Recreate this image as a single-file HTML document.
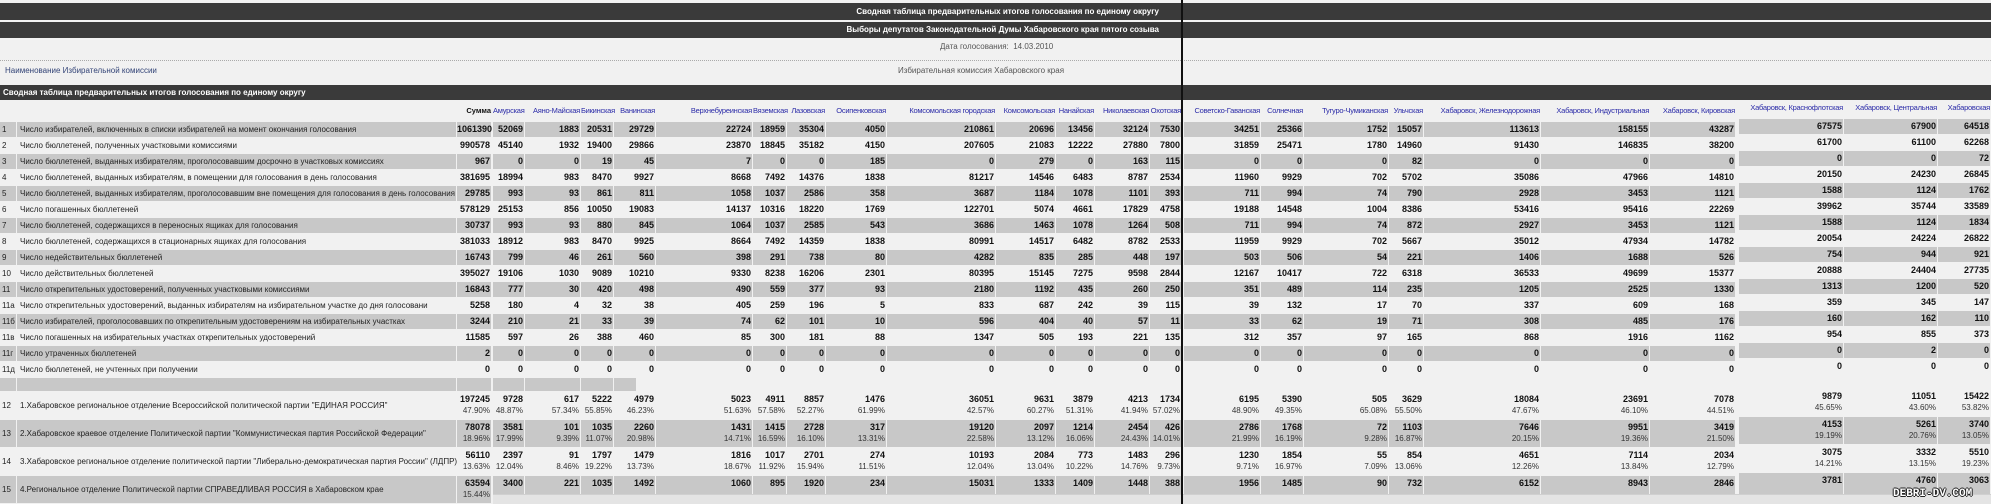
<!DOCTYPE html>
<html><head><meta charset="utf-8">
<style>
*{margin:0;padding:0;box-sizing:border-box}
body{width:1991px;height:504px;overflow:hidden;background:#f1f1f1;position:relative;font-family:"Liberation Sans","DejaVu Sans",sans-serif;color:#111}
.bar{position:absolute;left:0;width:1991px;background:#3a3a3a;color:#fff;font-weight:bold;font-size:8px;line-height:15px}
.bar span{position:absolute;right:832px;top:0}
.vl{position:absolute;left:1181px;top:0;width:2px;height:504px;background:#111;z-index:5}
.t{position:absolute;font-size:8px;color:#555;white-space:nowrap}
.r{position:absolute;left:0;width:1991px;height:16px;font-size:9px}
.r b,.r i,.r u{position:absolute;top:0;height:15px;line-height:15px;white-space:nowrap;text-decoration:none;font-style:normal}
.r b{text-align:right;padding-right:1px;font-weight:bold}
.r i{left:0;width:16px;padding-left:2px;font-size:8px;color:#222}
.r u{left:17px;width:439px;padding-left:3px;font-size:8px;color:#222}
.g b,.g i,.g u{background:#c8c8c8}
.h b{font-weight:normal;color:#2b2ba8;font-size:7.5px;letter-spacing:-0.25px;top:6px;line-height:10px;padding-right:0}
.h b.c0{color:#111;font-weight:bold;letter-spacing:0}
.p{height:28px}
.p b,.p i,.p u{height:27px}
.p i,.p u{line-height:27px}
.p b{line-height:11px;padding-top:2px}
.p b s{text-decoration:none;font-weight:normal;font-size:8px;color:#333;display:block}
.c21,.c22,.c23{transform:translateY(-3px)}
.c0{left:457px;width:34px}.c1{left:493px;width:31px}.c2{left:525px;width:55px}.c3{left:581px;width:32px}.c4{left:614px;width:41px}.c5{left:656px;width:96px}.c6{left:753px;width:33px}.c7{left:787px;width:38px}.c8{left:826px;width:60px}.c9{left:887px;width:108px}.c10{left:996px;width:59px}.c11{left:1056px;width:38px}.c12{left:1095px;width:54px}.c13{left:1150px;width:31px}.c14{left:1184px;width:76px}.c15{left:1261px;width:42px}.c16{left:1304px;width:84px}.c17{left:1389px;width:34px}.c18{left:1424px;width:116px}.c19{left:1541px;width:108px}.c20{left:1650px;width:85px}.c21{left:1739px;width:104px}.c22{left:1844px;width:93px}.c23{left:1938px;width:52px}
.wm{position:absolute;left:1893px;top:488px;font-size:11px;font-weight:bold;color:#fff;font-family:"Liberation Mono",monospace;text-shadow:1px 0 #222,-1px 0 #222,0 1px #222,0 -1px #222;z-index:6}
</style></head><body>
<div class="bar" style="top:3px;height:17px"><span style="top:1px">Сводная таблица предварительных итогов голосования по единому округу</span></div>
<div class="bar" style="top:22px;height:16px"><span>Выборы депутатов Законодательной Думы Хабаровского края пятого созыва</span></div>
<div class="t" style="left:940px;top:42px">Дата голосования:&nbsp; 14.03.2010</div>
<div style="position:absolute;left:0;top:60px;width:1991px;border-top:1px dotted #aaa"></div>
<div class="t" style="left:5px;top:66px;color:#334477">Наименование Избирательной комиссии</div>
<div class="t" style="left:898px;top:66px">Избирательная комиссия Хабаровского края</div>
<div class="bar" style="top:85px;height:15px"><span style="left:3px;right:auto">Сводная таблица предварительных итогов голосования по единому округу</span></div>
<div class="vl"></div>

<div class="r h" style="top:100px;height:22px"><b class="c0">Сумма</b><b class="c1">Амурская</b><b class="c2">Аяно-Майская</b><b class="c3">Бикинская</b><b class="c4">Ванинская</b><b class="c5">Верхнебуреинская</b><b class="c6">Вяземская</b><b class="c7">Лазовская</b><b class="c8">Осипенковская</b><b class="c9">Комсомольская городская</b><b class="c10">Комсомольская</b><b class="c11">Нанайская</b><b class="c12">Николаевская</b><b class="c13">Охотская</b><b class="c14">Советско-Гаванская</b><b class="c15">Солнечная</b><b class="c16">Тугуро-Чумиканская</b><b class="c17">Ульчская</b><b class="c18">Хабаровск, Железнодорожная</b><b class="c19">Хабаровск, Индустриальная</b><b class="c20">Хабаровск, Кировская</b><b class="c21">Хабаровск, Краснофлотская</b><b class="c22">Хабаровск, Центральная</b><b class="c23">Хабаровская</b></div>

<div class="r g" style="top:122px"><i>1</i><u>Число избирателей, включенных в списки избирателей на момент окончания голосования</u><b class="c0">1061390</b><b class="c1">52069</b><b class="c2">1883</b><b class="c3">20531</b><b class="c4">29729</b><b class="c5">22724</b><b class="c6">18959</b><b class="c7">35304</b><b class="c8">4050</b><b class="c9">210861</b><b class="c10">20696</b><b class="c11">13456</b><b class="c12">32124</b><b class="c13">7530</b><b class="c14">34251</b><b class="c15">25366</b><b class="c16">1752</b><b class="c17">15057</b><b class="c18">113613</b><b class="c19">158155</b><b class="c20">43287</b><b class="c21">67575</b><b class="c22">67900</b><b class="c23">64518</b></div>
<div class="r" style="top:138px"><i>2</i><u>Число бюллетеней, полученных участковыми комиссиями</u><b class="c0">990578</b><b class="c1">45140</b><b class="c2">1932</b><b class="c3">19400</b><b class="c4">29866</b><b class="c5">23870</b><b class="c6">18845</b><b class="c7">35182</b><b class="c8">4150</b><b class="c9">207605</b><b class="c10">21083</b><b class="c11">12222</b><b class="c12">27880</b><b class="c13">7800</b><b class="c14">31859</b><b class="c15">25471</b><b class="c16">1780</b><b class="c17">14960</b><b class="c18">91430</b><b class="c19">146835</b><b class="c20">38200</b><b class="c21">61700</b><b class="c22">61100</b><b class="c23">62268</b></div>
<div class="r g" style="top:154px"><i>3</i><u>Число бюллетеней, выданных избирателям, проголосовавшим досрочно в участковых комиссиях</u><b class="c0">967</b><b class="c1">0</b><b class="c2">0</b><b class="c3">19</b><b class="c4">45</b><b class="c5">7</b><b class="c6">0</b><b class="c7">0</b><b class="c8">185</b><b class="c9">0</b><b class="c10">279</b><b class="c11">0</b><b class="c12">163</b><b class="c13">115</b><b class="c14">0</b><b class="c15">0</b><b class="c16">0</b><b class="c17">82</b><b class="c18">0</b><b class="c19">0</b><b class="c20">0</b><b class="c21">0</b><b class="c22">0</b><b class="c23">72</b></div>
<div class="r" style="top:170px"><i>4</i><u>Число бюллетеней, выданных избирателям, в помещении для голосования в день голосования</u><b class="c0">381695</b><b class="c1">18994</b><b class="c2">983</b><b class="c3">8470</b><b class="c4">9927</b><b class="c5">8668</b><b class="c6">7492</b><b class="c7">14376</b><b class="c8">1838</b><b class="c9">81217</b><b class="c10">14546</b><b class="c11">6483</b><b class="c12">8787</b><b class="c13">2534</b><b class="c14">11960</b><b class="c15">9929</b><b class="c16">702</b><b class="c17">5702</b><b class="c18">35086</b><b class="c19">47966</b><b class="c20">14810</b><b class="c21">20150</b><b class="c22">24230</b><b class="c23">26845</b></div>
<div class="r g" style="top:186px"><i>5</i><u>Число бюллетеней, выданных избирателям, проголосовавшим вне помещения для голосования в день голосования</u><b class="c0">29785</b><b class="c1">993</b><b class="c2">93</b><b class="c3">861</b><b class="c4">811</b><b class="c5">1058</b><b class="c6">1037</b><b class="c7">2586</b><b class="c8">358</b><b class="c9">3687</b><b class="c10">1184</b><b class="c11">1078</b><b class="c12">1101</b><b class="c13">393</b><b class="c14">711</b><b class="c15">994</b><b class="c16">74</b><b class="c17">790</b><b class="c18">2928</b><b class="c19">3453</b><b class="c20">1121</b><b class="c21">1588</b><b class="c22">1124</b><b class="c23">1762</b></div>
<div class="r" style="top:202px"><i>6</i><u>Число погашенных бюллетеней</u><b class="c0">578129</b><b class="c1">25153</b><b class="c2">856</b><b class="c3">10050</b><b class="c4">19083</b><b class="c5">14137</b><b class="c6">10316</b><b class="c7">18220</b><b class="c8">1769</b><b class="c9">122701</b><b class="c10">5074</b><b class="c11">4661</b><b class="c12">17829</b><b class="c13">4758</b><b class="c14">19188</b><b class="c15">14548</b><b class="c16">1004</b><b class="c17">8386</b><b class="c18">53416</b><b class="c19">95416</b><b class="c20">22269</b><b class="c21">39962</b><b class="c22">35744</b><b class="c23">33589</b></div>
<div class="r g" style="top:218px"><i>7</i><u>Число бюллетеней, содержащихся в переносных ящиках для голосования</u><b class="c0">30737</b><b class="c1">993</b><b class="c2">93</b><b class="c3">880</b><b class="c4">845</b><b class="c5">1064</b><b class="c6">1037</b><b class="c7">2585</b><b class="c8">543</b><b class="c9">3686</b><b class="c10">1463</b><b class="c11">1078</b><b class="c12">1264</b><b class="c13">508</b><b class="c14">711</b><b class="c15">994</b><b class="c16">74</b><b class="c17">872</b><b class="c18">2927</b><b class="c19">3453</b><b class="c20">1121</b><b class="c21">1588</b><b class="c22">1124</b><b class="c23">1834</b></div>
<div class="r" style="top:234px"><i>8</i><u>Число бюллетеней, содержащихся в стационарных ящиках для голосования</u><b class="c0">381033</b><b class="c1">18912</b><b class="c2">983</b><b class="c3">8470</b><b class="c4">9925</b><b class="c5">8664</b><b class="c6">7492</b><b class="c7">14359</b><b class="c8">1838</b><b class="c9">80991</b><b class="c10">14517</b><b class="c11">6482</b><b class="c12">8782</b><b class="c13">2533</b><b class="c14">11959</b><b class="c15">9929</b><b class="c16">702</b><b class="c17">5667</b><b class="c18">35012</b><b class="c19">47934</b><b class="c20">14782</b><b class="c21">20054</b><b class="c22">24224</b><b class="c23">26822</b></div>
<div class="r g" style="top:250px"><i>9</i><u>Число недействительных бюллетеней</u><b class="c0">16743</b><b class="c1">799</b><b class="c2">46</b><b class="c3">261</b><b class="c4">560</b><b class="c5">398</b><b class="c6">291</b><b class="c7">738</b><b class="c8">80</b><b class="c9">4282</b><b class="c10">835</b><b class="c11">285</b><b class="c12">448</b><b class="c13">197</b><b class="c14">503</b><b class="c15">506</b><b class="c16">54</b><b class="c17">221</b><b class="c18">1406</b><b class="c19">1688</b><b class="c20">526</b><b class="c21">754</b><b class="c22">944</b><b class="c23">921</b></div>
<div class="r" style="top:266px"><i>10</i><u>Число действительных бюллетеней</u><b class="c0">395027</b><b class="c1">19106</b><b class="c2">1030</b><b class="c3">9089</b><b class="c4">10210</b><b class="c5">9330</b><b class="c6">8238</b><b class="c7">16206</b><b class="c8">2301</b><b class="c9">80395</b><b class="c10">15145</b><b class="c11">7275</b><b class="c12">9598</b><b class="c13">2844</b><b class="c14">12167</b><b class="c15">10417</b><b class="c16">722</b><b class="c17">6318</b><b class="c18">36533</b><b class="c19">49699</b><b class="c20">15377</b><b class="c21">20888</b><b class="c22">24404</b><b class="c23">27735</b></div>
<div class="r g" style="top:282px"><i>11</i><u>Число открепительных удостоверений, полученных участковыми комиссиями</u><b class="c0">16843</b><b class="c1">777</b><b class="c2">30</b><b class="c3">420</b><b class="c4">498</b><b class="c5">490</b><b class="c6">559</b><b class="c7">377</b><b class="c8">93</b><b class="c9">2180</b><b class="c10">1192</b><b class="c11">435</b><b class="c12">260</b><b class="c13">250</b><b class="c14">351</b><b class="c15">489</b><b class="c16">114</b><b class="c17">235</b><b class="c18">1205</b><b class="c19">2525</b><b class="c20">1330</b><b class="c21">1313</b><b class="c22">1200</b><b class="c23">520</b></div>
<div class="r" style="top:298px"><i>11а</i><u>Число открепительных удостоверений, выданных избирателям на избирательном участке до дня голосовани</u><b class="c0">5258</b><b class="c1">180</b><b class="c2">4</b><b class="c3">32</b><b class="c4">38</b><b class="c5">405</b><b class="c6">259</b><b class="c7">196</b><b class="c8">5</b><b class="c9">833</b><b class="c10">687</b><b class="c11">242</b><b class="c12">39</b><b class="c13">115</b><b class="c14">39</b><b class="c15">132</b><b class="c16">17</b><b class="c17">70</b><b class="c18">337</b><b class="c19">609</b><b class="c20">168</b><b class="c21">359</b><b class="c22">345</b><b class="c23">147</b></div>
<div class="r g" style="top:314px"><i>11б</i><u>Число избирателей, проголосовавших по открепительным удостоверениям на избирательных участках</u><b class="c0">3244</b><b class="c1">210</b><b class="c2">21</b><b class="c3">33</b><b class="c4">39</b><b class="c5">74</b><b class="c6">62</b><b class="c7">101</b><b class="c8">10</b><b class="c9">596</b><b class="c10">404</b><b class="c11">40</b><b class="c12">57</b><b class="c13">11</b><b class="c14">33</b><b class="c15">62</b><b class="c16">19</b><b class="c17">71</b><b class="c18">308</b><b class="c19">485</b><b class="c20">176</b><b class="c21">160</b><b class="c22">162</b><b class="c23">110</b></div>
<div class="r" style="top:330px"><i>11в</i><u>Число погашенных на избирательных участках открепительных удостоверений</u><b class="c0">11585</b><b class="c1">597</b><b class="c2">26</b><b class="c3">388</b><b class="c4">460</b><b class="c5">85</b><b class="c6">300</b><b class="c7">181</b><b class="c8">88</b><b class="c9">1347</b><b class="c10">505</b><b class="c11">193</b><b class="c12">221</b><b class="c13">135</b><b class="c14">312</b><b class="c15">357</b><b class="c16">97</b><b class="c17">165</b><b class="c18">868</b><b class="c19">1916</b><b class="c20">1162</b><b class="c21">954</b><b class="c22">855</b><b class="c23">373</b></div>
<div class="r g" style="top:346px"><i>11г</i><u>Число утраченных бюллетеней</u><b class="c0">2</b><b class="c1">0</b><b class="c2">0</b><b class="c3">0</b><b class="c4">0</b><b class="c5">0</b><b class="c6">0</b><b class="c7">0</b><b class="c8">0</b><b class="c9">0</b><b class="c10">0</b><b class="c11">0</b><b class="c12">0</b><b class="c13">0</b><b class="c14">0</b><b class="c15">0</b><b class="c16">0</b><b class="c17">0</b><b class="c18">0</b><b class="c19">0</b><b class="c20">0</b><b class="c21">0</b><b class="c22">2</b><b class="c23">0</b></div>
<div class="r" style="top:362px"><i>11д</i><u>Число бюллетеней, не учтенных при получении</u><b class="c0">0</b><b class="c1">0</b><b class="c2">0</b><b class="c3">0</b><b class="c4">0</b><b class="c5">0</b><b class="c6">0</b><b class="c7">0</b><b class="c8">0</b><b class="c9">0</b><b class="c10">0</b><b class="c11">0</b><b class="c12">0</b><b class="c13">0</b><b class="c14">0</b><b class="c15">0</b><b class="c16">0</b><b class="c17">0</b><b class="c18">0</b><b class="c19">0</b><b class="c20">0</b><b class="c21">0</b><b class="c22">0</b><b class="c23">0</b></div>
<div class="r g" style="top:378px;height:14px"><i style="height:13px"></i><u style="height:13px"></u><b class="c0" style="height:13px"></b><b class="c1" style="height:13px"></b><b class="c2" style="height:13px"></b><b class="c3" style="height:13px"></b><b class="c4" style="height:13px;width:22px"></b></div>

<div class="r p" style="top:392px"><i>12</i><u>1.Хабаровское региональное отделение Всероссийской политической партии "ЕДИНАЯ РОССИЯ"</u><b class="c0">197245<s>47.90%</s></b><b class="c1">9728<s>48.87%</s></b><b class="c2">617<s>57.34%</s></b><b class="c3">5222<s>55.85%</s></b><b class="c4">4979<s>46.23%</s></b><b class="c5">5023<s>51.63%</s></b><b class="c6">4911<s>57.58%</s></b><b class="c7">8857<s>52.27%</s></b><b class="c8">1476<s>61.99%</s></b><b class="c9">36051<s>42.57%</s></b><b class="c10">9631<s>60.27%</s></b><b class="c11">3879<s>51.31%</s></b><b class="c12">4213<s>41.94%</s></b><b class="c13">1734<s>57.02%</s></b><b class="c14">6195<s>48.90%</s></b><b class="c15">5390<s>49.35%</s></b><b class="c16">505<s>65.08%</s></b><b class="c17">3629<s>55.50%</s></b><b class="c18">18084<s>47.67%</s></b><b class="c19">23691<s>46.10%</s></b><b class="c20">7078<s>44.51%</s></b><b class="c21">9879<s>45.65%</s></b><b class="c22">11051<s>43.60%</s></b><b class="c23">15422<s>53.82%</s></b></div>
<div class="r p g" style="top:420px"><i>13</i><u>2.Хабаровское краевое отделение Политической партии "Коммунистическая партия Российской Федерации"</u><b class="c0">78078<s>18.96%</s></b><b class="c1">3581<s>17.99%</s></b><b class="c2">101<s>9.39%</s></b><b class="c3">1035<s>11.07%</s></b><b class="c4">2260<s>20.98%</s></b><b class="c5">1431<s>14.71%</s></b><b class="c6">1415<s>16.59%</s></b><b class="c7">2728<s>16.10%</s></b><b class="c8">317<s>13.31%</s></b><b class="c9">19120<s>22.58%</s></b><b class="c10">2097<s>13.12%</s></b><b class="c11">1214<s>16.06%</s></b><b class="c12">2454<s>24.43%</s></b><b class="c13">426<s>14.01%</s></b><b class="c14">2786<s>21.99%</s></b><b class="c15">1768<s>16.19%</s></b><b class="c16">72<s>9.28%</s></b><b class="c17">1103<s>16.87%</s></b><b class="c18">7646<s>20.15%</s></b><b class="c19">9951<s>19.36%</s></b><b class="c20">3419<s>21.50%</s></b><b class="c21">4153<s>19.19%</s></b><b class="c22">5261<s>20.76%</s></b><b class="c23">3740<s>13.05%</s></b></div>
<div class="r p" style="top:448px"><i>14</i><u>3.Хабаровское региональное отделение политической партии "Либерально-демократическая партия России" (ЛДПР)</u><b class="c0">56110<s>13.63%</s></b><b class="c1">2397<s>12.04%</s></b><b class="c2">91<s>8.46%</s></b><b class="c3">1797<s>19.22%</s></b><b class="c4">1479<s>13.73%</s></b><b class="c5">1816<s>18.67%</s></b><b class="c6">1017<s>11.92%</s></b><b class="c7">2701<s>15.94%</s></b><b class="c8">274<s>11.51%</s></b><b class="c9">10193<s>12.04%</s></b><b class="c10">2084<s>13.04%</s></b><b class="c11">773<s>10.22%</s></b><b class="c12">1483<s>14.76%</s></b><b class="c13">296<s>9.73%</s></b><b class="c14">1230<s>9.71%</s></b><b class="c15">1854<s>16.97%</s></b><b class="c16">55<s>7.09%</s></b><b class="c17">854<s>13.06%</s></b><b class="c18">4651<s>12.26%</s></b><b class="c19">7114<s>13.84%</s></b><b class="c20">2034<s>12.79%</s></b><b class="c21">3075<s>14.21%</s></b><b class="c22">3332<s>13.15%</s></b><b class="c23">5510<s>19.23%</s></b></div>
<div class="r p g" style="top:476px"><i>15</i><u>4.Региональное отделение Политической партии СПРАВЕДЛИВАЯ РОССИЯ в Хабаровском крае</u><b class="c0">63594<s>15.44%</s></b><b class="c1">3400</b><b class="c2">221</b><b class="c3">1035</b><b class="c4">1492</b><b class="c5">1060</b><b class="c6">895</b><b class="c7">1920</b><b class="c8">234</b><b class="c9">15031</b><b class="c10">1333</b><b class="c11">1409</b><b class="c12">1448</b><b class="c13">388</b><b class="c14">1956</b><b class="c15">1485</b><b class="c16">90</b><b class="c17">732</b><b class="c18">6152</b><b class="c19">8943</b><b class="c20">2846</b><b class="c21">3781</b><b class="c22">4760</b><b class="c23">3063</b></div>
<div style="position:absolute;left:493px;top:494px;width:1498px;height:10px;background:#e4e4e4;border-top:1px solid #d0d0d0"></div>
<div class="wm">DEBRI-DV.COM</div>
</body></html>
